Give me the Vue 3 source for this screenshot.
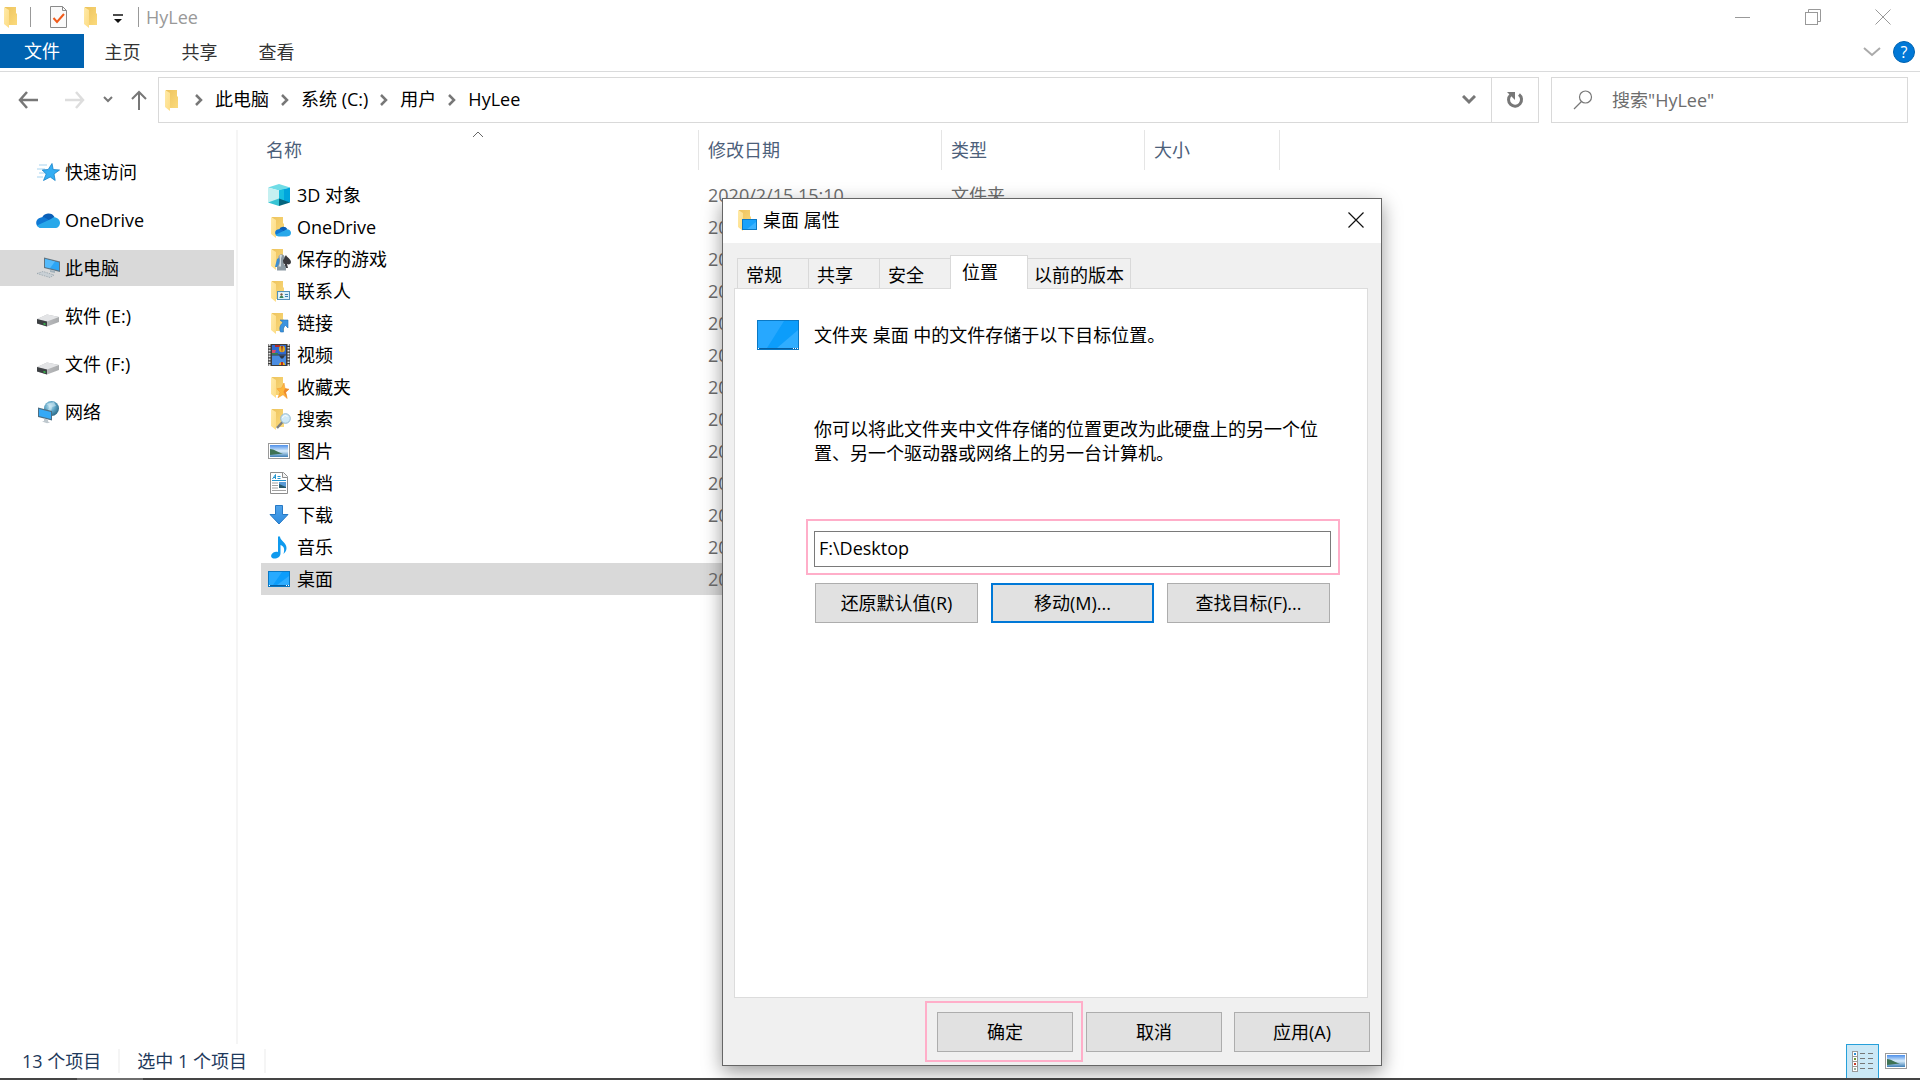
<template>
  <div class="explorer">
    <svg class="sprite" aria-hidden="true">
      <defs>
        <linearGradient id="g-front" x1="0" y1="0" x2="1" y2="1">
          <stop offset="0" stop-color="#ffeaa8" />
          <stop offset="1" stop-color="#fddc84" />
        </linearGradient>
        <linearGradient id="g-back" x1="0" y1="0" x2="1" y2="1">
          <stop offset="0" stop-color="#edc35d" />
          <stop offset="1" stop-color="#fbda7c" />
        </linearGradient>
        <linearGradient id="g-sky" x1="0" y1="0" x2="0" y2="1">
          <stop offset="0" stop-color="#4d8fea" />
          <stop offset="0.5" stop-color="#d8ecfa" />
          <stop offset="1" stop-color="#3f7fb5" />
        </linearGradient>
        <linearGradient id="g-arrow" x1="0" y1="0" x2="0" y2="1">
          <stop offset="0" stop-color="#52a4ea" />
          <stop offset="1" stop-color="#2d8ce0" />
        </linearGradient>
        <radialGradient id="g-globe" cx="0.4" cy="0.35" r="0.7">
          <stop offset="0" stop-color="#c4e4f2" />
          <stop offset="0.5" stop-color="#5ba3c4" />
          <stop offset="1" stop-color="#27637f" />
        </radialGradient>
        <linearGradient id="g-drive" x1="0" y1="0" x2="1" y2="0">
          <stop offset="0" stop-color="#c4c5c7" />
          <stop offset="1" stop-color="#a9abad" />
        </linearGradient>
      </defs>

      <symbol id="i-folder" viewBox="0 0 24 24">
        <path d="M5 2h11v6l1 1v11H5z" fill="url(#g-back)" />
        <path d="M4 2l5 3v18l-5-4z" fill="url(#g-front)" />
      </symbol>
      <symbol id="i-cube" viewBox="0 0 24 24">
        <path d="M1 4.500l11-3.500 11 3.500-11 3z" fill="#6fdce6" />
        <path d="M1 4.500l11 3v10l-11 2z" fill="#c5f0f1" />
        <path d="M12 7.500l11-3v15l-11-2z" fill="#00a5dc" />
        <path d="M12 7.500l5-1.500v12.500l-5-1z" fill="#17bfe0" />
        <path d="M1 19.500l11-4v7.500z" fill="#37c4d4" />
        <path d="M23 19.500l-11-4v7.500z" fill="#04657e" />
      </symbol>
      <symbol id="i-cloud" viewBox="0 0 24 24">
        <path d="M6 10a7 7 0 0 1 12.500-1L15 15 6 12z" fill="#0a5fb8" />
        <path d="M5 9.500c2-.6 4 0 5 .8L21 17c-1 2-2 3-3 3H5.500C-1.500 19.500-1.500 10.500 5 9.500z" fill="#0f78d4" />
        <path d="M17.500 9.200c4 0 6.500 2.500 6.500 5.500 0 3-2 5.300-5 5.300H5.500c-2 0-3.500-1-4.500-2.500L15 11z" fill="#28a8ea" />
      </symbol>
      <symbol id="i-onedrive" viewBox="0 0 24 24">
        <use href="#i-folder" width="24" height="24" />
        <use href="#i-cloud" x="8" y="8" width="16" height="16" />
      </symbol>
      <symbol id="i-games" viewBox="0 0 24 24">
        <use href="#i-folder" width="24" height="24" />
        <path d="M8 20l2-8 3-2v10z" fill="#3c8ed2" />
        <path d="M19 8c1 2.500 5 4 5 7 0 2-2 3-4 2l1 4h-4l1-4c-2 0-3-1-3-2.500C15 12 18 10 19 8z" fill="#3b3b3f" />
        <path d="M12 12a3 3 0 1 1 5 0l-1 1c0 4 2 5 3 7v3.500h-9V20c1-2 2.500-3 2.500-7z" fill="#8c9aa3" />
        <path d="M12.500 8.500c1-1 2-1 2.500 0l-1 3v8h-2.500c1-2 1.500-4 1.500-7z" fill="#d4dde2" />
      </symbol>
      <symbol id="i-contacts" viewBox="0 0 24 24">
        <use href="#i-folder" width="24" height="24" />
        <rect x="10.500" y="12.500" width="12" height="8" fill="#d9f0fa" stroke="#5391b8" />
        <rect x="12.500" y="14" width="4" height="5" fill="#fff" />
        <circle cx="14.500" cy="15.500" r="1.200" fill="#735b45" />
        <path d="M12.500 19c0-3 4-3 4 0z" fill="#37865b" />
        <path d="M18 15.500h3M18 17.500h3" stroke="#3d7fb0" />
      </symbol>
      <symbol id="i-links" viewBox="0 0 24 24">
        <use href="#i-folder" width="24" height="24" />
        <path d="M13 9h8v8l-2.500-2.500c-2 1.500-2.500 3.500-2 6.500h-3c-1.500-4-.5-7 2.500-9.500z" fill="#3b93df" stroke="#1f6fb9" stroke-width=".6" />
      </symbol>
      <symbol id="i-video" viewBox="0 0 24 24">
        <rect x="1" y="1" width="22" height="22" fill="#3b3b3b" />
        <path d="M2.500 1v22M21.500 1v22" stroke="#e4e4e4" stroke-width="2" stroke-dasharray="1.700 1.200" />
        <rect x="5" y="2" width="14" height="9.500" fill="#2f69cf" />
        <rect x="5" y="12.500" width="14" height="9.500" fill="#4a8de3" />
        <path d="M8 2h5v2H8z" fill="#b02b2b" />
        <ellipse cx="15" cy="6" rx="3" ry="3.200" fill="#e0ac24" />
        <path d="M14.200 3h1.600l-.8 7z" fill="#8b1e24" />
        <path d="M5 7h4l-1 3H5z" fill="#d94d6d" />
        <path d="M5 10h6v1.500H5z" fill="#37864a" />
        <path d="M12 12.500h6l-2 3h-2z" fill="#30343e" />
        <path d="M12 22c0-4 6-4 6 0z" fill="#f2b51b" />
        <path d="M14 19h2v3h-2z" fill="#ba3020" />
      </symbol>
      <symbol id="i-favorites" viewBox="0 0 24 24">
        <use href="#i-folder" width="24" height="24" />
        <path d="M17 8l1 5.500 4 .7-3.300 3 1.500 6.300-4.200-3.800-5 3 2-5.500-3-3.500 4.500-.7z" fill="#fdb73c" stroke="#f29b35" stroke-width=".6" />
        <path d="M17 8l1 5.500-1.500 3.500 3.700 6.500-1.500-6.300 3.300-3-4-.7z" fill="#ee8a2d" />
      </symbol>
      <symbol id="i-search-folder" viewBox="0 0 24 24">
        <use href="#i-folder" width="24" height="24" />
        <path d="M10 21l5.500-6" stroke="#7b7f83" stroke-width="2.500" />
        <circle cx="18.500" cy="11.500" r="4.800" fill="#cfe9f8" stroke="#93b9d0" />
        <path d="M15.500 11c1-3 4-3 5-1" stroke="#fff" fill="none" />
      </symbol>
      <symbol id="i-picture" viewBox="0 0 24 24">
        <rect x="1.500" y="4.500" width="21" height="15" fill="#fff" stroke="#9a9a9a" />
        <rect x="3" y="6" width="18" height="12" fill="url(#g-sky)" />
        <path d="M3 10c4 0 7 3 13 4.500L3 16z" fill="#3f7355" />
      </symbol>
      <symbol id="i-document" viewBox="0 0 24 24">
        <path d="M3.500 1.500h13l4 4v17h-17z" fill="#fff" stroke="#8d8d8d" />
        <path d="M15.500 1.500v5h5" fill="#f2f2f2" stroke="#8d8d8d" />
        <path d="M5.500 8L8.500 3.500V8M6.500 6.500h2M10.500 5.500h3M10.500 7.500h3M5 9.500h14" stroke="#2395cf" fill="none" />
        <path d="M5 12h6M5 14.500h6M5 17h6M5 19.500h14" stroke="#a2a2a2" />
        <rect x="12" y="11" width="7" height="6" fill="#5b9bd5" />
        <path d="M12 13l7 3v1h-7z" fill="#28596b" />
      </symbol>
      <symbol id="i-download" viewBox="0 0 24 24">
        <path d="M8.500 2.500h7v9h5.500L12 21 3 11.500h5.500z" fill="url(#g-arrow)" stroke="#2779c5" />
      </symbol>
      <symbol id="i-music" viewBox="0 0 24 24">
        <path d="M11 1.500h2c0 4 6.500 6 6.500 11.500 0 3-1.500 4.500-3 6 1.500-5 .5-8-3-9v8.500c0 3-3 5-6 5s-4-2-3-4 4-3.500 6.500-2.500z" fill="#0f9aee" />
      </symbol>
      <symbol id="i-desktop" viewBox="0 0 24 24">
        <rect x="1.500" y="4.500" width="21" height="15" fill="#0c9dfb" stroke="#0a78c4" />
        <path d="M2 5h13L6 18H2z" fill="#27aaff" />
        <path d="M22 9v9H10z" fill="#2fadff" />
        <path d="M2 18.500h20" stroke="#0760a4" />
        <path d="M2 18.500h1M19 18.500h1M21 18.500h1" stroke="#fff" />
      </symbol>
      <symbol id="i-desktop-folder" viewBox="0 0 24 24">
        <use href="#i-folder" width="24" height="24" />
        <rect x="8.500" y="11.500" width="14" height="10" fill="#18a2fb" stroke="#0a78c4" />
        <path d="M22 14v7H13z" fill="#3ab2ff" />
      </symbol>
      <symbol id="i-quick" viewBox="0 0 24 24">
        <path d="M3 5h8M1 9h8M3 13h6M1 17h6" stroke="#a6d3ef" />
        <path d="M16 3.500l1.200 6 6.300.5-5.500 4 1.200 6.500-5-3.500-6.700 3.500 2.700-6.500-4-4 6-.5z" fill="#35aef3" stroke="#1683c9" stroke-width=".8" />
      </symbol>
      <symbol id="i-pc" viewBox="0 0 24 24">
        <path d="M8 1.500l16 4v10.500L8 12z" fill="#5f7482" />
        <path d="M9 3l14 3.500v8L9 11z" fill="#2ca5f5" />
        <path d="M9 3l10 2.500-5 6.700L9 11z" fill="#55bbfb" />
        <path d="M14 14l5 1v2l-5-1z" fill="#a3b2bb" />
        <path d="M1 17.500l6-2 11 3.500-4 2.500z" fill="#c9d0d5" stroke="#98a4ac" stroke-width=".8" stroke-dasharray="1.500 1" />
      </symbol>
      <symbol id="i-drive" viewBox="0 0 24 24">
        <path d="M1 15l10-4.500 12 2.500v5l-12 4.500-10-3z" fill="url(#g-drive)" />
        <path d="M1 15l10-4.500 12 2.500-12 4.500z" fill="#e3e4e6" />
        <path d="M1 15l10 2.500v5l-10-3z" fill="#3d4043" />
        <path d="M7.500 19l2 .5v1.500l-2-.5z" fill="#35c94c" />
      </symbol>
      <symbol id="i-network" viewBox="0 0 24 24">
        <circle cx="15.500" cy="8.500" r="7.500" fill="url(#g-globe)" />
        <path d="M10 4c3 1 4 3 2 6l3 2 1-5 4-1-2-4" fill="#d5edf5" opacity=".55" />
        <path d="M2 7.500l14 3.500v9.500L2 17z" fill="#4d6e82" />
        <path d="M3 9l12 3v7L3 16z" fill="#35a9f6" />
        <path d="M8 18.500l4 1v2l2 1-3 .7-5-1.700 2-.5z" fill="#bfc8ce" />
      </symbol>
    </svg>

    <header class="titlebar">
      <div class="quick-tools">
        <svg class="icon"><use href="#i-folder" /></svg>
        <span class="bar"></span>
        <button class="plain tool-check" type="button" aria-label="属性">
          <svg width="18" height="24" viewBox="0 0 18 24">
            <path d="M.5 1.500h12l4 4v17H.5z" fill="#fafafa" stroke="#8a8a8a" />
            <path d="M12.500 1.500v4h4" fill="none" stroke="#8a8a8a" />
            <path d="M3.500 13l3.500 4 7-8" fill="none" stroke="#f05a1a" stroke-width="2" />
          </svg>
        </button>
        <button class="plain" type="button" aria-label="新建文件夹">
          <svg class="icon"><use href="#i-folder" /></svg>
        </button>
        <button class="plain tool-more" type="button" aria-label="自定义快速访问工具栏">
          <svg width="10" height="10" viewBox="0 0 10 10">
            <path d="M0 1h10" stroke="#111" stroke-width="1.500" />
            <path d="M1 5h8L5 9z" fill="#111" />
          </svg>
        </button>
        <span class="bar"></span>
        <h1>HyLee</h1>
      </div>
      <div class="window-buttons">
        <button class="plain" type="button" aria-label="最小化">
          <svg width="16" height="16" viewBox="0 0 16 16"><path d="M0 8.500h15" stroke="#999" /></svg>
        </button>
        <button class="plain" type="button" aria-label="还原">
          <svg width="16" height="16" viewBox="0 0 16 16" fill="none" stroke="#999">
            <rect x=".5" y="3.500" width="12" height="12" />
            <path d="M3.500 3.500v-3h12v12h-3" />
          </svg>
        </button>
        <button class="plain" type="button" aria-label="关闭">
          <svg width="16" height="16" viewBox="0 0 16 16"><path d="M.5.500l15 15M15.500.500l-15 15" stroke="#999" /></svg>
        </button>
      </div>
    </header>

    <nav class="ribbon">
      <button class="file-tab" type="button">文件</button>
      <button v-for="tab in ribbonTabs" :key="tab" class="ribbon-tab" type="button">{{ tab }}</button>
      <div class="ribbon-end">
        <button class="plain" type="button" aria-label="展开功能区">
          <svg width="18" height="12" viewBox="0 0 18 12"><path d="M1 2l8 7 8-7" fill="none" stroke="#aaa" stroke-width="2" /></svg>
        </button>
        <button class="help" type="button" aria-label="帮助">?</button>
      </div>
    </nav>

    <div class="address-row">
      <div class="nav-buttons">
        <button class="plain" type="button" aria-label="后退">
          <svg width="20" height="18" viewBox="0 0 20 18"><path d="M9 1L2 9l7 8M2 9h18" fill="none" stroke="#777" stroke-width="2.500" /></svg>
        </button>
        <button class="plain forward" type="button" aria-label="前进">
          <svg width="20" height="18" viewBox="0 0 20 18"><path d="M11 1l7 8-7 8M18 9H0" fill="none" stroke="#ddd" stroke-width="2.500" /></svg>
        </button>
        <button class="plain recent" type="button" aria-label="最近浏览的位置">
          <svg width="10" height="8" viewBox="0 0 10 8"><path d="M1 1l4 4 4-4" fill="none" stroke="#777" stroke-width="2" /></svg>
        </button>
        <button class="plain up" type="button" aria-label="上移">
          <svg width="16" height="20" viewBox="0 0 16 20"><path d="M1 9l7-7 7 7M8 2v18" fill="none" stroke="#777" stroke-width="2" /></svg>
        </button>
      </div>
      <div class="address">
        <svg class="icon"><use href="#i-folder" /></svg>
        <template v-for="crumb in crumbs" :key="crumb">
          <svg class="crumb-arrow" width="8" height="12" viewBox="0 0 8 12"><path d="M1 1l5 5-5 5" fill="none" stroke="#777" stroke-width="2.500" /></svg>
          <a href="#">{{ crumb }}</a>
        </template>
        <button class="plain history" type="button" aria-label="以前的位置">
          <svg width="14" height="10" viewBox="0 0 14 10"><path d="M1 1l6 6 6-6" fill="none" stroke="#777" stroke-width="3" /></svg>
        </button>
        <button class="plain refresh" type="button" aria-label="刷新">
          <svg width="18" height="18" viewBox="0 0 18 18">
            <path d="M13 3.500A6.500 6.500 0 1 1 4.500 4" fill="none" stroke="#777" stroke-width="3" />
            <path d="M1 1h8v8z" fill="#777" />
          </svg>
        </button>
      </div>
      <label class="search">
        <svg width="20" height="20" viewBox="0 0 20 20" fill="none" stroke="#777" stroke-width="1.200">
          <circle cx="12.500" cy="7" r="6" />
          <path d="M8.500 11.500L1 19" />
        </svg>
        <input type="text" placeholder="搜索&quot;HyLee&quot;" aria-label="搜索" />
      </label>
    </div>

    <main class="body">
      <aside class="sidebar">
        <a v-for="place in places" :key="place.name" href="#" :class="{ current: place.current }">
          <svg class="icon"><use :href="'#i-' + place.icon" /></svg>
          {{ place.name }}
        </a>
      </aside>

      <section class="files">
        <table>
          <thead>
            <tr>
              <th class="col-name">
                <div>
                  名称
                  <svg class="sort" width="12" height="7" viewBox="0 0 12 7"><path d="M1 6l5-5 5 5" fill="none" stroke="#666" /></svg>
                </div>
              </th>
              <th class="col-date"><div>修改日期</div></th>
              <th class="col-type"><div>类型</div></th>
              <th class="col-size"><div>大小</div></th>
            </tr>
          </thead>
          <tbody>
            <tr v-for="file in files" :key="file.name" :class="{ selected: file.name === '桌面' }">
              <td>
                <div class="file-name">
                  <svg class="icon"><use :href="'#i-' + file.icon" /></svg>
                  {{ file.name }}
                </div>
              </td>
              <td class="meta">2020/2/15 15:10</td>
              <td class="meta">文件夹</td>
              <td></td>
            </tr>
          </tbody>
        </table>
      </section>
    </main>

    <footer class="status">
      <span>13 个项目</span>
      <span>选中 1 个项目</span>
      <div class="views">
        <button class="view-details" type="button" aria-label="详细信息">
          <svg width="22" height="22" viewBox="0 0 22 22">
            <g fill="#fff" stroke="#999">
              <rect x=".5" y=".5" width="5" height="5" />
              <rect x=".5" y="5.500" width="5" height="5" />
              <rect x=".5" y="10.500" width="5" height="5" />
              <rect x=".5" y="15.500" width="5" height="5" />
            </g>
            <path d="M2 3h2" stroke="#2a8fd4" stroke-width="2" />
            <path d="M2 8h2" stroke="#6f9a3a" stroke-width="2" />
            <path d="M2 13h2" stroke="#c43b2a" stroke-width="2" />
            <path d="M2 18h2" stroke="#8fae9a" stroke-width="2" />
            <path d="M8 2.500h5M16 2.500h5M8 7.500h5M16 7.500h5M8 12.500h5M16 12.500h5M8 17.500h5M16 17.500h5" stroke="#777" />
          </svg>
        </button>
        <button class="plain" type="button" aria-label="大缩略图">
          <svg class="icon"><use href="#i-picture" /></svg>
        </button>
      </div>
    </footer>
    <div class="taskbar-edge"><span></span></div>

    <div class="dialog" role="dialog" aria-labelledby="dialog-title">
      <div class="dialog-title">
        <svg class="icon"><use href="#i-desktop-folder" /></svg>
        <h2 id="dialog-title">桌面 属性</h2>
        <button class="plain" type="button" aria-label="关闭对话框">
          <svg width="16" height="16" viewBox="0 0 16 16"><path d="M.5.500l15 15M15.500.500l-15 15" stroke="#111" stroke-width="1.200" /></svg>
        </button>
      </div>

      <div class="tabs" role="tablist">
        <button
          v-for="tab in dialogTabs"
          :key="tab"
          type="button"
          role="tab"
          :aria-selected="tab === activeTab"
          :class="{ active: tab === activeTab }"
          @click="activeTab = tab"
        >{{ tab }}</button>
      </div>

      <div class="panel">
        <div class="intro">
          <svg width="42" height="30" viewBox="0 0 42 30">
            <rect x=".5" y=".5" width="41" height="29" fill="#0c9dfb" stroke="#0a78c4" />
            <path d="M1 1h26L10 28H1z" fill="#27a8ff" />
            <path d="M41 10v18H20z" fill="#2fadff" />
            <path d="M1 28.500h40" stroke="#0760a4" />
            <path d="M1 28.500h1M36 28.500h1M38 28.500h1M40 28.500h1" stroke="#fff" />
          </svg>
          <p>文件夹 桌面 中的文件存储于以下目标位置。</p>
        </div>
        <p class="hint">你可以将此文件夹中文件存储的位置更改为此硬盘上的另一个位置、另一个驱动器或网络上的另一台计算机。</p>
        <div class="highlight path-box">
          <input v-model="path" type="text" aria-label="目标位置" />
        </div>
        <div class="actions">
          <button class="btn" type="button">还原默认值(R)</button>
          <button class="btn default" type="button">移动(M)...</button>
          <button class="btn" type="button">查找目标(F)...</button>
        </div>
      </div>

      <div class="dialog-footer">
        <div class="highlight ok-box">
          <button class="btn" type="button">确定</button>
        </div>
        <button class="btn cancel" type="button">取消</button>
        <button class="btn" type="button">应用(A)</button>
      </div>
    </div>
  </div>
</template>

<script setup>
import { ref } from 'vue'

const ribbonTabs = ['主页', '共享', '查看']
const crumbs = ['此电脑', '系统 (C:)', '用户', 'HyLee']

const places = [
  { name: '快速访问', icon: 'quick' },
  { name: 'OneDrive', icon: 'cloud' },
  { name: '此电脑', icon: 'pc', current: true },
  { name: '软件 (E:)', icon: 'drive' },
  { name: '文件 (F:)', icon: 'drive' },
  { name: '网络', icon: 'network' },
]

const files = [
  { name: '3D 对象', icon: 'cube' },
  { name: 'OneDrive', icon: 'onedrive' },
  { name: '保存的游戏', icon: 'games' },
  { name: '联系人', icon: 'contacts' },
  { name: '链接', icon: 'links' },
  { name: '视频', icon: 'video' },
  { name: '收藏夹', icon: 'favorites' },
  { name: '搜索', icon: 'search-folder' },
  { name: '图片', icon: 'picture' },
  { name: '文档', icon: 'document' },
  { name: '下载', icon: 'download' },
  { name: '音乐', icon: 'music' },
  { name: '桌面', icon: 'desktop' },
]

const dialogTabs = ['常规', '共享', '安全', '位置', '以前的版本']
const activeTab = ref('位置')
const path = ref('F:\\Desktop')
</script>

<style>
body {
  background: #fff;
}
</style>

<style scoped>
.explorer {
  position: relative;
  display: flex;
  flex-direction: column;
  min-height: 100vh;
  font-family: "Open Sans", "Noto Sans CJK SC", sans-serif;
  font-size: 18px;
  line-height: 24px;
  color: #000;
}

.explorer * {
  box-sizing: border-box;
}

.sprite {
  position: absolute;
  width: 0;
  height: 0;
}

svg {
  display: block;
  flex: none;
}

.icon {
  width: 24px;
  height: 24px;
}

button,
input {
  font: inherit;
  color: inherit;
}

.plain {
  display: flex;
  align-items: center;
  justify-content: center;
  padding: 0;
  border: 0;
  background: none;
}

a {
  color: inherit;
  text-decoration: none;
}

h1,
h2,
p {
  margin: 0;
  font-size: 18px;
  font-weight: normal;
}

/* 标题栏 */
.titlebar {
  display: flex;
  justify-content: space-between;
  height: 34px;
}

.quick-tools {
  display: flex;
  align-items: center;
}

.bar {
  width: 1px;
  height: 20px;
  margin-left: 6px;
  background: #999;
}

.tool-check {
  margin: 0 12px 0 19px;
}

.tool-more {
  margin: 4px 9px 0 9px;
}

.quick-tools h1 {
  margin-left: 7px;
  color: #999;
}

.window-buttons {
  display: flex;
  padding-right: 2px;
}

.window-buttons button {
  width: 70px;
}

/* 功能区 */
.ribbon {
  display: flex;
  height: 38px;
  padding-bottom: 3px;
  border-bottom: 1px solid #dadbdc;
}

.file-tab,
.ribbon-tab {
  padding: 0;
  border: 0;
  background: none;
  color: #333;
}

.file-tab {
  width: 84px;
  background: #0063b1;
  color: #fff;
}

.ribbon-tab {
  width: 77px;
  padding-top: 2px;
}

.ribbon-end {
  display: flex;
  align-items: center;
  gap: 12px;
  margin-left: auto;
  padding: 2px 5px 0 0;
}

.help {
  width: 22px;
  height: 22px;
  padding: 0;
  border: 1px solid #0063b1;
  border-radius: 50%;
  background: #0078d7;
  color: #fff;
  font-size: 16px;
  line-height: 20px;
}

/* 地址栏 */
.address-row {
  display: flex;
  padding: 5px 12px 6px 18px;
}

.nav-buttons {
  display: flex;
  width: 140px;
}

.forward {
  margin-left: 27px;
}

.recent {
  margin-left: 18px;
}

.up {
  margin-left: 18px;
}

.address {
  display: flex;
  flex: 1;
  align-items: center;
  height: 46px;
  padding-left: 2px;
  border: 1px solid #d9d9d9;
}

.address a {
  padding-bottom: 2px;
}

.crumb-arrow {
  margin: 0 12px;
}

.address .icon + .crumb-arrow {
  margin-left: 10px;
}

.history {
  width: 44px;
  height: 44px;
  margin-left: auto;
}

.refresh {
  width: 47px;
  height: 44px;
  border-left: 1px solid #d9d9d9;
}

.search {
  display: flex;
  align-items: center;
  width: 357px;
  margin-left: 12px;
  padding-left: 21px;
  border: 1px solid #d9d9d9;
}

.search input {
  flex: 1;
  min-width: 0;
  margin-left: 19px;
  padding: 0;
  border: 0;
  outline: 0;
  background: none;
}

.search input::placeholder {
  color: #6d6d6d;
  opacity: 1;
}

/* 主体 */
.body {
  display: flex;
  flex: 1;
}

.sidebar {
  display: flex;
  flex-direction: column;
  gap: 12px;
  width: 238px;
  margin-top: 1px;
  padding: 24px 2px 0 0;
  border-right: 2px solid #f5f5f5;
}

.sidebar a {
  display: flex;
  align-items: center;
  gap: 5px;
  height: 36px;
  padding-left: 36px;
}

.sidebar .current {
  background: #d9d9d9;
}

.files {
  padding: 1px 0 0 23px;
}

table {
  width: 1019px;
  border-spacing: 0;
  table-layout: fixed;
}

th,
td {
  padding: 0;
  text-align: left;
  font-weight: normal;
}

th {
  height: 49px;
  vertical-align: top;
  color: #4c607a;
}

th div {
  position: relative;
  height: 40px;
  padding: 8px 0 0 9px;
  border-right: 1px solid #e5e5e5;
}

.col-name {
  width: 438px;
}

.col-name div {
  padding-left: 5px;
}

.col-date {
  width: 243px;
}

.col-type {
  width: 203px;
}

.sort {
  position: absolute;
  top: 1px;
  left: 211px;
}

td {
  height: 32px;
}

.meta {
  padding-left: 9px;
  color: #6d6d6d;
}

.file-name {
  display: flex;
  align-items: center;
  gap: 6px;
  padding-left: 6px;
}

.selected td {
  background: #d9d9d9;
}

/* 状态栏 */
.status {
  display: flex;
  align-items: center;
  height: 34px;
  padding-left: 5px;
  color: #1e395b;
}

.status span {
  padding: 0 17px;
  border-right: 2px solid #f5f5f5;
}

.views {
  display: flex;
  align-items: stretch;
  height: 34px;
  margin-left: auto;
  padding-right: 12px;
  gap: 5px;
}

.view-details {
  display: flex;
  align-items: center;
  justify-content: center;
  width: 33px;
  padding: 0;
  border: 1px solid #26a0da;
  border-bottom: 0;
  background: #cbe8f6;
}

.taskbar-edge {
  height: 2px;
  padding-left: 77px;
  background: #454545;
}

.taskbar-edge span {
  display: block;
  width: 66px;
  height: 2px;
  background: #6e6e6e;
}

/* 属性对话框 */
.dialog {
  position: absolute;
  top: 198px;
  left: 722px;
  display: flex;
  flex-direction: column;
  width: 660px;
  height: 868px;
  border: 1px solid #666;
  background: #f0f0f0;
  box-shadow: 0 6px 18px rgba(0, 0, 0, 0.4);
}

.dialog-title {
  display: flex;
  align-items: center;
  height: 44px;
  padding: 0 17px 2px 11px;
  background: #fff;
}

.dialog-title h2 {
  margin-left: 5px;
}

.dialog-title button {
  margin-left: auto;
}

.tabs {
  display: flex;
  align-items: flex-end;
  height: 45px;
  padding-left: 14px;
}

.tabs button {
  width: 71px;
  height: 30px;
  padding: 2px 0 0 8px;
  border: 1px solid #d9d9d9;
  border-right: 0;
  border-bottom: 0;
  background: #f0f0f0;
  text-align: left;
  line-height: 26px;
}

.tabs .active {
  z-index: 1;
  width: 78px;
  height: 34px;
  margin-bottom: -1px;
  padding: 0 0 2px 11px;
  border-right: 1px solid #d9d9d9;
  background: #fff;
}

.tabs .active + button {
  width: 103px;
  padding-left: 6px;
  border-right: 1px solid #d9d9d9;
  border-left: 0;
}

.panel {
  flex: 1;
  margin: 0 13px 0 11px;
  padding: 31px 36px 0 22px;
  border: 1px solid #dcdcdc;
  background: #fff;
}

.intro {
  display: flex;
  align-items: center;
  gap: 15px;
}

.hint {
  width: 508px;
  margin: 67px 0 0 57px;
}

.highlight {
  border: 2px solid #ffaec9;
}

.path-box {
  width: 534px;
  margin: 54px 0 0 49px;
  padding: 10px 7px 6px 6px;
}

.path-box input {
  display: block;
  width: 100%;
  height: 36px;
  padding: 0 4px 3px;
  border: 1px solid #7a7a7a;
  outline: 0;
  background: #fff;
}

.actions {
  display: flex;
  gap: 13px;
  margin: 8px 0 0 58px;
}

.btn {
  height: 40px;
  padding: 0;
  border: 1px solid #adadad;
  background: #e1e1e1;
}

.actions .btn {
  width: 163px;
}

.actions .default {
  border: 2px solid #0078d7;
}

.dialog-footer {
  display: flex;
  align-items: center;
  justify-content: flex-end;
  height: 67px;
  padding-right: 11px;
}

.dialog-footer .btn {
  width: 136px;
}

.dialog-footer .cancel {
  margin: 0 12px 0 3px;
}

.ok-box {
  padding: 9px 8px 8px 10px;
}
</style>
